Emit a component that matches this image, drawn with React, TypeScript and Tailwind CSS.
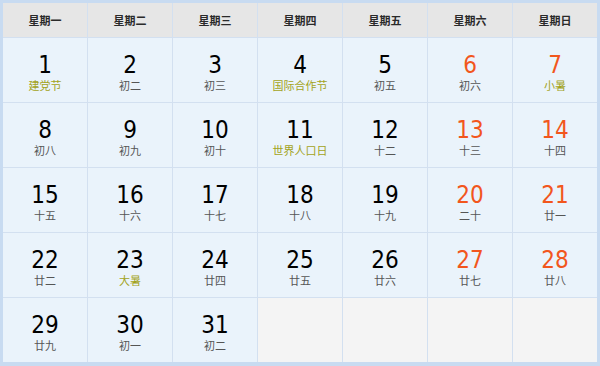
import React from "react";

type Cell = { d?: number; l?: string; red?: boolean; fest?: boolean };

const rows: Cell[][] = [
  [
    { d: 1, l: "建党节", fest: true },
    { d: 2, l: "初二" },
    { d: 3, l: "初三" },
    { d: 4, l: "国际合作节", fest: true },
    { d: 5, l: "初五" },
    { d: 6, l: "初六", red: true },
    { d: 7, l: "小暑", red: true, fest: true },
  ],
  [
    { d: 8, l: "初八" },
    { d: 9, l: "初九" },
    { d: 10, l: "初十" },
    { d: 11, l: "世界人口日", fest: true },
    { d: 12, l: "十二" },
    { d: 13, l: "十三", red: true },
    { d: 14, l: "十四", red: true },
  ],
  [
    { d: 15, l: "十五" },
    { d: 16, l: "十六" },
    { d: 17, l: "十七" },
    { d: 18, l: "十八" },
    { d: 19, l: "十九" },
    { d: 20, l: "二十", red: true },
    { d: 21, l: "廿一", red: true },
  ],
  [
    { d: 22, l: "廿二" },
    { d: 23, l: "大暑", fest: true },
    { d: 24, l: "廿四" },
    { d: 25, l: "廿五" },
    { d: 26, l: "廿六" },
    { d: 27, l: "廿七", red: true },
    { d: 28, l: "廿八", red: true },
  ],
  [
    { d: 29, l: "廿九" },
    { d: 30, l: "初一" },
    { d: 31, l: "初二" },
    {},
    {},
    {},
    {},
  ],
];

const heads = ["星期一", "星期二", "星期三", "星期四", "星期五", "星期六", "星期日"];

export default function App() {
  return (
    <div className="w-[600px] h-[366px] bg-white">
      <div
        className="w-[600px] h-[366px] border-[3px] border-b-4 border-[#c8dbf1] bg-[#d3e0f0] grid grid-cols-[repeat(7,84px)] grid-rows-[34px_repeat(5,64px)] gap-px"
        style={{ fontFamily: '"Noto Sans CJK SC", "Noto Sans", sans-serif' }}
      >
        {heads.map((h) => (
          <div
            key={h}
            className="bg-[#e6e6e6] flex items-center justify-center text-[11px] font-bold text-[#2a2a2a]"
          >
            {h}
          </div>
        ))}
        {rows.flat().map((c, i) =>
          c.d === undefined ? (
            <div key={i} className="bg-[#f4f4f4]" />
          ) : (
            <div
              key={i}
              className="bg-[#eaf3fb] flex flex-col items-center justify-center pt-[3px]"
            >
              <div
                className={`text-[24px] leading-[26px] ${c.red ? "text-[#f2561d]" : "text-black"}`}
                style={{ fontFamily: '"DejaVu Sans Condensed", "DejaVu Sans", sans-serif' }}
              >
                {c.d}
              </div>
              <div
                className={`text-[11px] leading-[14px] ${c.fest ? "text-[#a3a31a]" : "text-[#555]"}`}
              >
                {c.l}
              </div>
            </div>
          )
        )}
      </div>
    </div>
  );
}
